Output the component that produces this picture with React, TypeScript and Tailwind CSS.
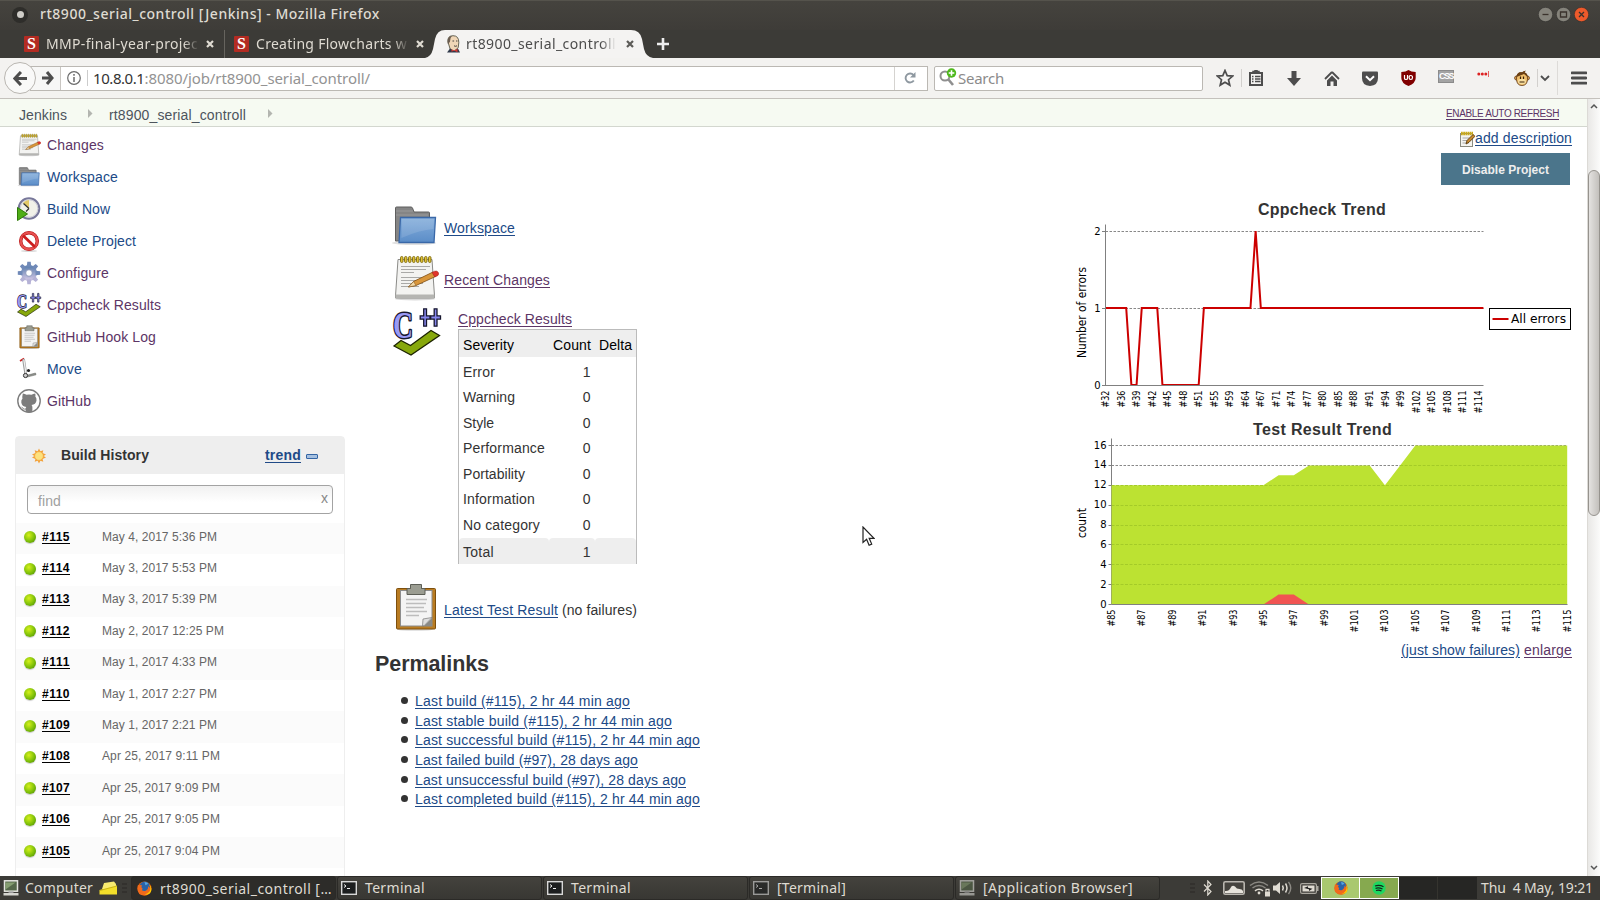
import { useLayoutEffect, useRef, useState, type ReactNode } from 'react';

const UI = "font-['Noto_Sans',sans-serif]";

/** Text that spreads its letters so that the run takes exactly `w` pixels. */
function Fit({ w, className = '', children }: { w: number; className?: string; children: string }) {
  const ref = useRef<HTMLSpanElement>(null);
  const [ls, setLs] = useState(0);
  useLayoutEffect(() => {
    if (ref.current) {
      const natural = ref.current.getBoundingClientRect().width - ls * children.length;
      setLs((w - natural) / children.length);
    }
    // eslint-disable-next-line
  }, [w, children]);
  return (
    <span ref={ref} className={`inline-block shrink-0 whitespace-pre ${className}`} style={{ letterSpacing: ls }}>
      {children}
    </span>
  );
}

/* ---------- icons ---------- */

type IconProps = { size: number };

function FolderIcon({ size }: IconProps) {
  return (
    <svg width={size} height={size} viewBox="0 0 48 48" className="shrink-0">
      <defs>
        <linearGradient id="fold" x1="0" y1="0" x2="0" y2="1">
          <stop offset="0" stopColor="#85aedb" />
          <stop offset="1" stopColor="#5b8dc8" />
        </linearGradient>
      </defs>
      <ellipse cx="23" cy="41" rx="22" ry="2" fill="#000" opacity=".12" />
      <path d="M4.500 39V6q0-1 1-1h14.500q1 0 1.500 1l1.500 4h14.500q1 0 1 1V38z" fill="#858585" stroke="#5f5f5f" />
      <path d="M5 9h17M5 13h32" stroke="#a5a5a5" strokeWidth=".7" />
      <path d="M9.500 15.500h35L43 40.500H8z" fill="url(#fold)" stroke="#3a68a8" strokeWidth="1.300" />
      <path d="M11 17h32l-.6 10q-14 1-32 9z" fill="#fff" opacity=".12" />
    </svg>
  );
}

function NotepadIcon({ size }: IconProps) {
  return (
    <svg width={size} height={size} viewBox="0 0 48 48" className="shrink-0">
      <ellipse cx="24" cy="45" rx="20" ry="1.500" fill="#000" opacity=".15" />
      <path d="M7 5.500h34L43.500 42v2h-39v-2z" fill="#f3f3f1" stroke="#8b8b88" />
      <path d="M4.500 40.500h39v3.500h-39z" fill="#b5b5b2" />
      {[0, 1, 2, 3, 4, 5, 6, 7].map((i) => (
        <rect key={i} x={9.500 + i * 4} y="2.500" width="2.500" height="6" rx="1.200" fill="#e0c234" stroke="#7d6a10" strokeWidth=".9" />
      ))}
      <path d="M10 12.500h29M10 15.500h25M10 18.500h13M10 23.500h25M10 26.500h18M10 29.500h22M10 32.500h18" stroke="#a9a9a7" />
      <path d="M17.500 33l5-5.500 19.500-9.500 2.500 4.500-19.500 9z" fill="#d9963a" stroke="#7d4c12" strokeWidth=".8" />
      <path d="M17.500 33l5-5.500 2.500 4z" fill="#f1d9a8" stroke="#7d4c12" strokeWidth=".5" />
      <path d="M41 18.500l2.500-1.300q2.500-.7 3.700 1.100t-.5 3.400l-2.900 1.300z" fill="#e0352b" stroke="#98231b" strokeWidth=".5" />
    </svg>
  );
}

function ClipboardIcon({ size }: IconProps) {
  return (
    <svg width={size} height={size} viewBox="0 0 48 48" className="shrink-0">
      <ellipse cx="24" cy="46.500" rx="18" ry="1.300" fill="#000" opacity=".15" />
      <rect x="5.500" y="5.500" width="39" height="40.500" rx="1" fill="#b97c22" stroke="#7d4f0d" />
      <rect x="9.500" y="7.500" width="31.500" height="35.500" fill="#f4f4f4" stroke="#8c8c8c" />
      <path d="M16 5.500h3.500V1.500h11v4H34V11.500H16z" fill="#9b9d92" stroke="#5d5f57" />
      <path d="M15 16.500h21M15 20.500h20M15 24.500h18M15 28.500h21M15 32.500h13" stroke="#bdbdbd" strokeWidth="1.600" />
      <path d="M41 34.500l-9 1.500-.5 6.800h1.500z" fill="#dedede" stroke="#777" strokeWidth=".7" />
      <path d="M41 35v8h-8z" fill="#8a8a86" />
    </svg>
  );
}

function CppIcon({ size }: IconProps) {
  return (
    <svg width={size} height={size} viewBox="0 0 48 48" className="shrink-0 overflow-visible">
      <text x="0" y="29.500" fontFamily="Liberation Serif, serif" fontWeight="bold" fontSize="37" fill="#9a9af5" stroke="#17172e" strokeWidth="3" strokeLinejoin="round" paintOrder="stroke" textLength="20" lengthAdjust="spacingAndGlyphs">C</text>
      {[26.500, 37].map((x) => (
        <path key={x} d={`M${x + 4.200} .8h2.800v7h3.500v3.400h-3.500v7h-2.800v-7h-3.500v-3.400h3.500z`} fill="#8787ee" stroke="#17172e" strokeWidth="1.300" />
      ))}
      <path d="M1 38l7-5.500 9.500 5L38 22.500l8.500 5L18 47z" fill="#87a80c" stroke="#1d2400" strokeWidth="1.300" />
    </svg>
  );
}

function ClockIcon({ size }: IconProps) {
  return (
    <svg width={size} height={size} viewBox="0 0 24 24" className="shrink-0">
      <circle cx="12" cy="11.500" r="10.300" fill="#f1f1e9" stroke="#77779a" strokeWidth="2" />
      <circle cx="12" cy="11.500" r="8.800" fill="none" stroke="#c9c9d6" />
      <path d="M12 11.500L6 6q3-3 6-3z" fill="#e3c967" />
      <path d="M12 11.500L6.500 6.500M12 11.500l-3 3" stroke="#333" strokeWidth="1.200" />
      <path d="M.5 10.500L10.500 17 .5 23.500z" fill="#4fae17" stroke="#2f7a08" />
    </svg>
  );
}

function StopIcon({ size }: IconProps) {
  return (
    <svg width={size} height={size} viewBox="0 0 24 24" className="shrink-0">
      <ellipse cx="12" cy="22" rx="8" ry="1" fill="#000" opacity=".15" />
      <circle cx="12" cy="12" r="8.300" fill="#fff" stroke="#b71010" strokeWidth="3.400" />
      <circle cx="12" cy="12" r="8.300" fill="none" stroke="#e65050" strokeWidth="2.200" />
      <path d="M6 6.500l12 11.500" stroke="#cb1d1d" strokeWidth="2.800" />
    </svg>
  );
}

function GearIcon({ size }: IconProps) {
  return (
    <svg width={size} height={size} viewBox="0 0 24 24" className="shrink-0">
      <defs>
        <linearGradient id="gear" x1="0" y1="0" x2="0" y2="1">
          <stop offset="0" stopColor="#6685b3" />
          <stop offset="1" stopColor="#c6bfdf" />
        </linearGradient>
      </defs>
      <g fill="url(#gear)">
        <circle cx="12" cy="12" r="5.500" fill="none" stroke="url(#gear)" strokeWidth="5" />
        {[0, 45, 90, 135, 180, 225, 270, 315].map((a) => (
          <path key={a} d="M9.800 5.500L10.300.8h3.400l.5 4.700z" fill={a > 90 && a < 270 ? '#b5b2d6' : '#7089b8'} transform={`rotate(${a} 12 12)`} />
        ))}
      </g>
      <circle cx="12" cy="12" r="3.300" fill="#fff" stroke="#7f8bb3" strokeWidth=".8" />
    </svg>
  );
}

function MoveIcon({ size }: IconProps) {
  return (
    <svg width={size} height={size} viewBox="0 0 24 24" className="shrink-0">
      <path d="M3 4l4-2.500" stroke="#c22" strokeWidth="1.600" />
      <path d="M6.500 2l2.300 15" stroke="#9a9a9a" strokeWidth="2.800" />
      <path d="M6.800 2.500l2.200 14" stroke="#efefef" strokeWidth="1.300" />
      <path d="M8 18.800l10.500-2.800.5 1.800-9 2.300z" fill="#8e918c" stroke="#60635e" strokeWidth=".5" />
      <circle cx="11.500" cy="13.500" r="1.600" fill="#222" />
      <circle cx="8.500" cy="18.500" r="2.100" fill="#ccc" stroke="#333" strokeWidth="1" />
    </svg>
  );
}

function GithubIcon({ size }: IconProps) {
  return (
    <svg width={size} height={size} viewBox="0 0 24 24" className="shrink-0">
      <circle cx="12" cy="12" r="11.200" fill="#fff" stroke="#7d7d7d" strokeWidth="1.400" />
      <path d="M5.800 4.500q2.300.2 3.700 1.300 2.500-.5 5 0 1.400-1.100 3.700-1.300.6 1.600.1 3 1.500 1.700 1.200 4-.6 4-5 4.500.9.900.9 2.500v4.300l-3.400.7-3.400-.7v-2.300q-2.300.4-3.200-1.200-.5-1-1.400-1.500.9-.3 1.900 1 1 1.300 2.700.8.100-1 .7-1.600-4.400-.5-5-4.500-.3-2.300 1.200-4-.5-1.400.3-5z" fill="#7d7d7d" />
    </svg>
  );
}

function SunIcon() {
  return (
    <svg width="16" height="16" viewBox="0 0 16 16" className="shrink-0">
      <path d="M8 .5l1.400 2.700 2.900-1-.7 2.900 3.400 1.500L12.600 8l2.400 1.600-3.400 1.300.7 2.900-2.900-1L8 15.500l-1.400-2.700-2.900 1 .7-2.900L1 9.600 3.400 8 1 6.400l3.400-1.300-.7-2.900 2.900 1z" fill="#f3a23b" />
      <circle cx="8" cy="8" r="4.300" fill="#fde17d" stroke="#f0a63f" strokeWidth=".6" />
    </svg>
  );
}

function JenkinsHead() {
  return (
    <svg width="16" height="18" viewBox="0 0 16 18" className="shrink-0">
      <path d="M3 7Q2 1 8 .7q6 0 5.800 7l-.6 5-4 3.500-4-2z" fill="#f0d6b7" stroke="#443" strokeWidth=".8" />
      <path d="M2.800 9Q1.600 1.500 7 .8 4.800 3 4.900 7z" fill="#6b5d50" />
      <path d="M2 17.500l3-4 4 2.500 4-2.500 2 4z" fill="#30394a" />
      <path d="M6.500 14.200l6 3v-3.400l-6 3z" fill="#d33833" />
      <path d="M7.500 6h1.600M11 6h1.400M9 10.800q1.500 1 3 0" stroke="#333" strokeWidth=".9" fill="none" />
    </svg>
  );
}

function FirefoxIcon({ size }: IconProps) {
  return (
    <svg width={size} height={size} viewBox="0 0 16 16" className="shrink-0">
      <circle cx="8" cy="8" r="7.500" fill="#e66000" />
      <circle cx="8.300" cy="6" r="5.600" fill="#2a63a8" />
      <path d="M8 1q3 0 4 2l-3 1.500z" fill="#56a5e0" />
      <path d="M1 4q1 .7 2 .5 1.500-.4 2.500.5L4.500 6.500l1.500 1.700-.8 1.600q2.300 1.600 4.500.2 2.500-1 2.300-4.500 2.300 1 2.500 4Q13 15.500 8 15.500 .2 15 .5 8z" fill="#f06a1c" />
      <path d="M12.500 4q3 3 1 7-2 3-5 3.500 7 .5 6.900-6Q15 5 12.500 4z" fill="#ffcb00" />
    </svg>
  );
}

function TerminalIcon({ dim = false }: { dim?: boolean }) {
  return (
    <svg width="16" height="14" viewBox="0 0 16 14" className={dim ? 'shrink-0 opacity-60' : 'shrink-0'}>
      <rect x=".7" y=".7" width="14.600" height="12.600" fill="#1c1e1f" stroke="#d8d8d8" strokeWidth="1.400" />
      <path d="M3 3.500l2 1.500-2 1.500M6 7.500h3" stroke="#eee" fill="none" />
    </svg>
  );
}

function ComputerIcon({ dim = false }: { dim?: boolean }) {
  return (
    <svg width="16" height="16" viewBox="0 0 16 16" className={dim ? 'shrink-0 opacity-60' : 'shrink-0'}>
      <rect x="1.500" y=".8" width="13" height="10.400" fill="#55684a" stroke="#e4e4e0" strokeWidth="1.500" />
      <path d="M2.500 9.500V2.500h10z" fill="#9ab582" opacity=".7" />
      <path d="M5.500 11.500h5V13h-5z" fill="#999" />
      <rect x=".5" y="13" width="15" height="2.500" fill="#d5d5d0" />
    </svg>
  );
}

/* ---------- browser chrome ---------- */

function WindowTitle() {
  return (
    <div className={`flex h-[30px] items-center border-t border-[#55534c] bg-linear-to-b from-[#45433e] to-[#3e3c38] pb-[2px] pl-[12px] pr-[11px] text-[#dfdbd2] ${UI}`}>
      <div className="flex size-4 items-center justify-center rounded-full bg-[#2e2d2a]">
        <span className="size-[7px] rounded-full bg-[#cfcdc8]" />
      </div>
      <Fit w={340} className="-mt-[2px] ml-[12px] text-[14px] font-medium">rt8900_serial_controll [Jenkins] - Mozilla Firefox</Fit>
      <div className="ml-auto flex gap-[3px]">
        {['M4.500 7.500h6', 'M4.500 5h6v5h-6z', 'M5 5l5 5M10 5l-5 5'].map((d, i) => (
          <svg key={d} width="15" height="15" viewBox="0 0 15 15">
            <circle cx="7.500" cy="7.500" r="7.200" fill={i === 2 ? '#ee5a2b' : '#85837b'} stroke="#2f2e2b" strokeWidth=".6" />
            <path d={d} stroke="#3a322c" strokeWidth="1.300" fill="none" />
          </svg>
        ))}
      </div>
    </div>
  );
}

const tabClose = (color: string) => (
  <svg width="8" height="8" viewBox="0 0 8 8" className="shrink-0">
    <path d="M1 1l6 6M7 1L1 7" stroke={color} strokeWidth="2.200" />
  </svg>
);

function TabStrip() {
  return (
    <div className={`flex h-[28px] bg-[#3c3b37] text-[14px] leading-[25px] text-[#dfdbd2] ${UI}`}>
      {[['MMP-final-year-projec', 'w-[225px] pl-[24px] border-r border-[#66645e]', 152], ['Creating Flowcharts w', 'w-[204px] pl-[9px]', 151]].map(([t, c, w]) => (
        <div key={t as string} className={`flex items-center ${c}`}>
          <span className="flex h-4 w-[15px] shrink-0 items-center justify-center rounded-[1px] bg-[#b32b22] font-['Liberation_Serif',serif] text-[16px] font-bold leading-4 text-white">S</span>
          <span className="-mt-[2px] ml-[7px] mr-[7px] w-[153px] shrink-0 overflow-hidden mask-r-from-90%">
            <Fit w={w as number}>{t as string}</Fit>
          </span>
          {tabClose('#dfdbd2')}
        </div>
      ))}
      <div className="relative flex w-[223px] items-center pl-[16px] text-[#4c4c4c]">
        <svg width="228" height="28" viewBox="0 0 228 28" className="absolute -left-[4px] top-0">
          <path d="M0 28q6-1 8-9l2-10q2-9 10-9h186q9 0 11 9l2 10q2 8 9 9z" fill="#f4f3f2" />
        </svg>
        <div className="relative flex items-center">
          <JenkinsHead />
          <span className="-mt-[2px] ml-[5px] mr-[10px] w-[150px] overflow-hidden mask-r-from-90%">
            <Fit w={150}>rt8900_serial_controll</Fit>
          </span>
          {tabClose('#5c5b58')}
        </div>
      </div>
      <svg width="14" height="14" viewBox="0 0 14 14" className="ml-[4px] mt-[7px]">
        <path d="M7 1v12M1 7h12" stroke="#eee" strokeWidth="2.600" />
      </svg>
    </div>
  );
}

const G = '#4d4d4d';

function Slot({ w, children, className = '' }: { w: string; children: ReactNode; className?: string }) {
  return <div className={`flex shrink-0 items-center justify-center ${w} ${className}`}>{children}</div>;
}

function Toolbar() {
  return (
    <div className={`flex h-[41px] items-center border-b border-[#c4c1bc] bg-[#f3f2f0] pl-[4px] text-[15px] ${UI}`}>
      <div className="z-10 flex size-[32px] shrink-0 items-center justify-center rounded-full border border-[#b9b6b1] bg-[#f9f9f8]">
        <svg width="14" height="15" viewBox="0 0 15 16"><path d="M8.500 1L2 8l6.500 7M2 8h13" stroke={G} strokeWidth="3.200" fill="none" /></svg>
      </div>
      <div className="-ml-[6px] flex h-[25px] w-[898px] shrink-0 items-center border border-[#bbb8b3] bg-white">
        <div className="flex h-full w-[30px] items-center justify-center border-r border-[#c9c6c2] bg-[#f7f7f6] pl-1">
          <svg width="12" height="14" viewBox="0 0 12 14"><path d="M5 1l5 6-5 6M0 7h10" stroke={G} strokeWidth="3" fill="none" /></svg>
        </div>
        <svg width="14" height="14" viewBox="0 0 14 14" className="ml-[6px]">
          <circle cx="7" cy="7" r="6.300" fill="none" stroke="#6b6b6b" strokeWidth="1.200" />
          <path d="M7 6v5M7 3v1.800" stroke="#6b6b6b" strokeWidth="1.500" />
        </svg>
        <span className="ml-[6px] h-4 w-px bg-[#ccc]" />
        <Fit w={51.500} className="ml-[5px] text-[#333]">10.8.0.1</Fit>
        <Fit w={225.500} className="text-[#939393]">:8080/job/rt8900_serial_controll/</Fit>
        <div className="ml-auto flex h-full w-[33px] items-center justify-center border-l border-[#d5d3d0] pr-[2px]">
          <svg width="12" height="12" viewBox="0 0 12 12"><path d="M9.800 8.500A4.500 4.500 0 1 1 9.500 3" stroke="#8e98a0" strokeWidth="1.900" fill="none" /><path d="M11.500 0v5.500H6z" fill="#8e98a0" /></svg>
        </div>
      </div>
      <div className="ml-[6px] flex h-[25px] w-[269px] shrink-0 items-center rounded-[2px] border border-[#bbb8b3] bg-white pl-[4px]">
        <svg width="18" height="18" viewBox="0 0 18 18" className="-mt-[3px]">
          <circle cx="6" cy="8" r="4.500" fill="none" stroke="#8f8f8f" strokeWidth="2" />
          <path d="M9 11l5 6" stroke="#8f8f8f" strokeWidth="2.600" />
          <circle cx="12.500" cy="5" r="4.700" fill="#4fb81c" />
          <path d="M12.500 2.200v5.600M9.700 5h5.600" stroke="#fff" strokeWidth="1.600" />
        </svg>
        <Fit w={46} className="ml-[1px] text-[#8b8b8b]">Search</Fit>
      </div>
      <Slot w="w-[38px]" className="pl-[6px]">
        <svg width="18" height="18" viewBox="0 0 18 18"><path d="M9 1.500l2.200 5.100 5.500.5-4.200 3.600 1.300 5.400L9 13.200l-4.800 2.900 1.300-5.400L1.300 7.100l5.500-.5z" fill="none" stroke={G} strokeWidth="1.700" /></svg>
      </Slot>
      <Slot w="w-[34px]" className="h-[18px] border-l border-[#d2d0cd] pr-[5px]">
        <svg width="14" height="16" viewBox="0 0 14 16"><path d="M1 3h12v12H1z" fill="none" stroke={G} strokeWidth="2" /><path d="M4 3V1.500h2V0h2v1.500h2V3zM3 6.500h1.500M6 6.500h5.500M3 9h1.500M6 9h5.500M3 11.500h1.500M6 11.500h5.500" stroke={G} fill={G} strokeWidth="1.500" /></svg>
      </Slot>
      <Slot w="w-[38px]">
        <svg width="14" height="15" viewBox="0 0 14 15"><path d="M4.500 0h5v7H14l-7 8-7-8h4.500z" fill={G} /></svg>
      </Slot>
      <Slot w="w-[38px]">
        <svg width="16" height="15" viewBox="0 0 16 15"><path d="M8 1L1 8M8 1l7 7" stroke={G} strokeWidth="1.800" /><path d="M8 4.500L3 9.500V15h3.500v-4.500h3V15H13V9.500z" fill={G} /></svg>
      </Slot>
      <Slot w="w-[38px]">
        <svg width="16" height="15" viewBox="0 0 16 15"><path d="M0 1.500Q0 .5 1 .5h14q1 0 1 1V7q0 7.500-8 8Q0 14.500 0 7z" fill={G} /><path d="M4 5.200l4 4 4-4" stroke="#fff" strokeWidth="2" fill="none" /></svg>
      </Slot>
      <Slot w="w-[38px]">
        <svg width="15" height="16" viewBox="0 0 15 16"><path d="M7.500 0Q10 2 14.700 2v6q0 5-7.200 8Q.3 13 .3 8V2Q5 2 7.500 0z" fill="#800000" /><path d="M3.500 5v3.500q0 1 1.500 1t1.500-1V5M9.800 5.500q1.700 0 1.700 2t-1.700 2-1.700-2 1.700-2z" stroke="#fff" strokeWidth="1.200" fill="none" /></svg>
      </Slot>
      <Slot w="w-[38px]">
        <span className="-mt-[4px] flex h-[13px] w-4 shrink-0 items-center justify-center border border-[#8b8b8b] bg-[#a3a3a3] font-['Liberation_Sans',sans-serif] text-[9px] font-bold leading-[9px] text-white"><Fit w={14}>CSS</Fit></span>
      </Slot>
      <Slot w="w-[36px]">
        <svg width="12" height="6" viewBox="0 0 12 6" className="-mt-[8px]"><circle cx="1.800" cy="3" r="1.500" fill="#d22" /><circle cx="5.300" cy="3" r="1.500" fill="#d22" /><circle cx="8.800" cy="3" r="1.500" fill="#d22" /><path d="M11.500 0v6" stroke="#d22" strokeWidth=".7" /></svg>
      </Slot>
      <Slot w="w-[36px]" className="pl-[5px]">
        <svg width="16" height="16" viewBox="0 0 16 16"><circle cx="2.500" cy="8" r="2" fill="#d99a4e" stroke="#5c3510" strokeWidth=".7" /><circle cx="13.500" cy="8" r="2" fill="#d99a4e" stroke="#5c3510" strokeWidth=".7" /><path d="M8 2.500q6 0 5.500 7Q13 15.500 8 15.500T2.500 9.500q-.5-7 5.500-7z" fill="#f0bf6c" stroke="#5c3510" strokeWidth=".8" /><path d="M2.500 7Q3 1.500 8 2.500q1-2 4-1.800l-1.500 1.500Q14 3.500 13.500 7L10 4z" fill="#6b4014" /><ellipse cx="8" cy="11.500" rx="4" ry="2.800" fill="#f8dfa0" /><path d="M6.500 6.500v2.500M9.500 6.500v2.500M5.500 12h5" stroke="#3a2208" strokeWidth="1.200" /></svg>
      </Slot>
      <Slot w="w-[20px]" className="h-[18px] border-l border-[#d2d0cd] pr-[6px]">
        <svg width="10" height="7" viewBox="0 0 10 7"><path d="M1 1l4 4 4-4" stroke={G} strokeWidth="1.800" fill="none" /></svg>
      </Slot>
      <Slot w="w-[43px]" className="h-[34px] border-l border-[#dddbd8]">
        <svg width="16" height="14" viewBox="0 0 16 14"><path d="M1 1.800h14M1 7h14M1 12.200h14" stroke={G} strokeWidth="2.800" strokeLinecap="round" /></svg>
      </Slot>
    </div>
  );
}

/* ---------- page ---------- */

function Crumb() {
  return <svg width="5" height="9" viewBox="0 0 5 9" className="mb-[3px]"><path d="M0 0l4.500 4.500L0 9z" fill="#b3b5b0" /></svg>;
}

function Breadcrumbs() {
  return (
    <div className="flex h-[28px] items-center border-b border-[#d3d7cf] bg-[#f6faf2] pl-[19px] pr-[28px] pt-[5px] text-[14px] text-[#4d545d]">
      <Fit w={48}>Jenkins</Fit>
      <span className="w-[21px]" /><Crumb /><span className="w-[16px]" />
      <Fit w={137}>rt8900_serial_controll</Fit>
      <span className="w-[22px]" /><Crumb />
      <Fit w={113} className="ml-auto mb-[3px] text-[10px] leading-[12px] text-[#5c3566] underline underline-offset-2">ENABLE AUTO REFRESH</Fit>
    </div>
  );
}

const BLUE = 'text-[#204a87]';
const PURPLE = 'text-[#5c3566]';

const tasks: { label: string; w: number; color: string; icon: ReactNode }[] = [
  { label: 'Changes', w: 57, color: PURPLE, icon: <NotepadIcon size={24} /> },
  { label: 'Workspace', w: 71, color: BLUE, icon: <FolderIcon size={24} /> },
  { label: 'Build Now', w: 63, color: BLUE, icon: <ClockIcon size={24} /> },
  { label: 'Delete Project', w: 89, color: BLUE, icon: <StopIcon size={24} /> },
  { label: 'Configure', w: 62, color: PURPLE, icon: <GearIcon size={24} /> },
  { label: 'Cppcheck Results', w: 114, color: PURPLE, icon: <CppIcon size={24} /> },
  { label: 'GitHub Hook Log', w: 109, color: PURPLE, icon: <ClipboardIcon size={24} /> },
  { label: 'Move', w: 35, color: BLUE, icon: <MoveIcon size={24} /> },
  { label: 'GitHub', w: 44, color: PURPLE, icon: <GithubIcon size={24} /> },
];

const builds: [string, string, number][] = [
  ['#115', 'May 4, 2017 5:36 PM', 115],
  ['#114', 'May 3, 2017 5:53 PM', 115],
  ['#113', 'May 3, 2017 5:39 PM', 115],
  ['#112', 'May 2, 2017 12:25 PM', 122],
  ['#111', 'May 1, 2017 4:33 PM', 115],
  ['#110', 'May 1, 2017 2:27 PM', 115],
  ['#109', 'May 1, 2017 2:21 PM', 115],
  ['#108', 'Apr 25, 2017 9:11 PM', 118],
  ['#107', 'Apr 25, 2017 9:09 PM', 118],
  ['#106', 'Apr 25, 2017 9:05 PM', 118],
  ['#105', 'Apr 25, 2017 9:04 PM', 118],
];

function Sidebar() {
  return (
    <div className="w-[375px] shrink-0 pl-[15px] pt-[2px]">
      {tasks.map((t) => (
        <div key={t.label} className="flex h-[32px] items-center pl-[2px]">
          {t.icon}
          <Fit w={t.w} className={`ml-[6px] text-[14px] leading-5 ${t.color}`}>{t.label}</Fit>
        </div>
      ))}
      <div className="mt-[19px] h-[460px] w-[330px] rounded-t-[4px] border border-[#eeeeee]">
        <div className="flex h-[37px] items-center bg-[#eeeeee] pl-[15px] text-[14px] font-bold text-[#333]">
          <SunIcon />
          <Fit w={88} className="ml-[14px]">Build History</Fit>
          <Fit w={36} className={`ml-[116px] underline underline-offset-2 ${BLUE}`}>trend</Fit>
          <span className="ml-[5px] mt-[2px] h-[5px] w-[12px] rounded-[1px] border border-[#3465a4] bg-[#a5c0e0]" />
        </div>
        <div className="mx-[11px] mb-[9px] mt-[11px] flex h-[29px] w-[306px] items-center rounded-[4px] border border-[#a3a3a3] bg-linear-to-b from-[#f1f1f1] to-white to-60% pl-[10px] pr-[4px] text-[14px] text-[#a0a0a0]">
          <Fit w={23} className="mt-[3px]">find</Fit>
          <span className="-mt-[3px] ml-auto text-[14px] text-[#888]">x</span>
        </div>
        {builds.map(([n, d, w], i) => (
          <div key={n} className={`flex h-[31.400px] items-center pl-[8px] ${i % 2 === 0 ? 'bg-[#fbfbfb]' : ''}`}>
            <span className="-mt-[3px] size-[12px] rounded-full bg-radial-[at_40%_35%] from-[#d6f01c] via-[#85c40a] to-[#3f8400] shadow-[0_1px_1px_#0003]" />
            <Fit w={28} className="-mt-[4px] ml-[6px] text-[12px] font-bold leading-4 text-black underline underline-offset-2">{n}</Fit>
            <Fit w={w} className="-mt-[4px] ml-[32px] text-[12px] leading-4 text-[#666]">{d}</Fit>
          </div>
        ))}
      </div>
    </div>
  );
}

const severities = ['Error', 'Warning', 'Style', 'Performance', 'Portability', 'Information', 'No category'];
const sevWidths = [32, 52, 31, 82, 62, 72, 77];

function SeverityTable() {
  return (
    <div className="w-[179px] border border-b-0 border-[#bbb] text-[14px] text-[#333]">
      <div className="flex h-[27px] items-center bg-[#eee] pl-[4px] pt-[2px] text-black">
        <Fit w={51}>Severity</Fit>
        <Fit w={38} className="ml-[39px]">Count</Fit>
        <Fit w={33} className="ml-[8px]">Delta</Fit>
      </div>
      <div className="pt-[2px]">
        {severities.map((s, i) => (
          <div key={s} className="flex h-[25.500px] items-center justify-between pl-[4px] pr-[45.500px]">
            <Fit w={sevWidths[i]}>{s}</Fit>
            <span>{s === 'Error' ? 1 : 0}</span>
          </div>
        ))}
      </div>
      <div className="flex h-[26px]">
        <div className="flex w-[90px] items-center rounded-t-[4px] bg-[#eee] pl-[4px] pt-[2px]"><Fit w={31}>Total</Fit></div>
        <div className="flex w-[46px] items-center justify-end rounded-t-[4px] bg-[#eee] pr-[4.500px] pt-[2px]">1</div>
        <div className="flex-1 rounded-t-[4px] bg-[#eee]" />
      </div>
    </div>
  );
}

const permalinks: [string, number][] = [
  ['Last build (#115), 2 hr 44 min ago', 215],
  ['Last stable build (#115), 2 hr 44 min ago', 257],
  ['Last successful build (#115), 2 hr 44 min ago', 285],
  ['Last failed build (#97), 28 days ago', 223],
  ['Last unsuccessful build (#97), 28 days ago', 271],
  ['Last completed build (#115), 2 hr 44 min ago', 285],
];

const LINK = 'underline underline-offset-2';

function Overview() {
  return (
    <div className="flex-1 pt-[75px] text-[14px] leading-5 text-[#333]">
      <div className="ml-[16px]">
        <div className="flex h-[48px] items-center">
          <FolderIcon size={48} />
          <Fit w={71} className={`ml-[5px] mt-[3px] ${LINK} ${BLUE}`}>Workspace</Fit>
        </div>
        <div className="mt-[4px] flex h-[48px] items-center">
          <NotepadIcon size={48} />
          <Fit w={106} className={`ml-[5px] mt-[3px] ${LINK} ${PURPLE}`}>Recent Changes</Fit>
        </div>
        <div className="mt-[5px] flex">
          <div className="w-[67px] pl-[2px] pt-px"><CppIcon size={48} /></div>
          <div>
            <Fit w={114} className={`mt-[2px] block h-[17px] ${LINK} ${PURPLE}`}>Cppcheck Results</Fit>
            <SeverityTable />
          </div>
        </div>
        <div className="mt-[19px] flex h-[48px] items-center">
          <ClipboardIcon size={48} />
          <Fit w={114} className={`ml-[5px] mt-[6px] ${LINK} ${BLUE}`}>Latest Test Result</Fit>
          <Fit w={75} className="ml-[4px] mt-[6px]">(no failures)</Fit>
        </div>
      </div>
      <h2 className="mt-[20px] h-[26px] text-[21.500px] font-bold leading-[26px]"><Fit w={114}>Permalinks</Fit></h2>
      <ul className="mt-[15px] pl-[26px]">
        {permalinks.map(([t, w]) => (
          <li key={t} className="flex h-[19.600px] items-center">
            <span className="-mt-px size-[7px] rounded-full bg-[#333]" />
            <Fit w={w} className={`ml-[7px] ${LINK} ${BLUE}`}>{t}</Fit>
          </li>
        ))}
      </ul>
    </div>
  );
}

const cppLabels = [32, 36, 39, 42, 45, 48, 51, 55, 59, 64, 67, 71, 74, 77, 80, 85, 88, 91, 94, 99, 102, 105, 108, 111, 114];
const cppPoints: [number, number][] = [[0, 1], [4, 1], [5, 0], [6, 0], [7, 1], [10, 1], [11, 0], [18, 0], [19, 1], [28, 1], [29, 2], [30, 1], [73, 1]];

function TickLabel({ x, y, n }: { x: number; y: number; n: number }) {
  const len = n > 99 ? 23 : 17;
  return (
    <text transform={`translate(${x + 3.500} ${y + len}) rotate(-90)`} fontSize="10" textLength={len} lengthAdjust="spacingAndGlyphs">{`#${n}`}</text>
  );
}

/** Origin of both charts is the column's left edge. */
function CppcheckChart() {
  const x0 = 30.500, y0 = 162.500;
  const pts = cppPoints.map(([i, v]) => `${x0 + i * 5.177},${y0 - 0.500 - v * 77}`).join(' ');
  return (
    <svg width="500" height="192" viewBox="0 0 500 192" className="block" fontFamily="DejaVu Sans, sans-serif">
      {[1, 2].map((v) => (
        <path key={v} d={`M${x0} ${y0 - v * 77}H408.500`} stroke="#888" strokeDasharray="2.500 1.500" />
      ))}
      <polyline points={pts} fill="none" stroke="#c00" strokeWidth="2" />
      <path d={`M${x0} 1.500V${y0}H408.500M27 ${y0}h4M27 ${y0 - 77}h4M27 ${y0 - 154}h4`} stroke="#808080" fill="none" />
      {[0, 1, 2].map((v) => (
        <text key={v} x="25.500" y={y0 + 3.500 - v * 77} textAnchor="end" fontSize="10">{v}</text>
      ))}
      {cppLabels.map((n, i) => <TickLabel key={n} x={x0 + i * 15.530} y={167.500} n={n} />)}
      <text transform="translate(11 135) rotate(-90)" fontSize="12" textLength="91" lengthAdjust="spacingAndGlyphs">Number of errors</text>
      <rect x="414.500" y="85.500" width="81" height="21" fill="#fff" stroke="#000" />
      <path d="M417.500 96h16" stroke="#c00" strokeWidth="2" />
      <text x="436" y="100" fontSize="12" textLength="55" lengthAdjust="spacingAndGlyphs">All errors</text>
    </svg>
  );
}

function TestResultChart() {
  const x0 = 36.500, y0 = 167.500, u = 9.9375, s = 15.190;
  const p = (i: number, v: number) => `${x0 + i * s},${y0 - v * u}`;
  const green = [[0, 12], [10, 12], [11, 13], [12, 13], [13, 14], [17, 14], [18, 12], [19, 14], [20, 16], [30, 16], [30, 0], [0, 0]].map(([i, v]) => p(i, v)).join(' ');
  const red = [[10, 0], [11, 1], [12, 1], [13, 0]].map(([i, v]) => p(i, v)).join(' ');
  const ticks = [2, 4, 6, 8, 10, 12, 14, 16];
  const lineY = (v: number) => Math.floor(y0 - v * u) + 0.500;
  return (
    <svg width="500" height="200" viewBox="0 0 500 200" className="block" fontFamily="DejaVu Sans, sans-serif">
      {[14, 16].map((v) => (
        <path key={v} d={`M${x0} ${lineY(v)}H492`} stroke="#888" strokeDasharray="2.500 1.500" />
      ))}
      <path d={`M${x0} 1.500V${y0}`} stroke="#808080" />
      <polygon points={green} fill="#bce232" />
      {ticks.filter((v) => v < 14).map((v) => (
        <path key={v} d={`M${x0} ${lineY(v)}H492`} stroke="#a4cb28" strokeDasharray="3 1.500" />
      ))}
      <path d={`M${x0 + 19 * s} ${lineY(14)}H492`} stroke="#a4cb28" strokeDasharray="3 1.500" />
      <polygon points={red} fill="#f15452" />
      <path d={`M${x0} ${y0}H492.500`} stroke="#808080" />
      {[0, ...ticks].map((v) => (
        <g key={v}>
          <path d={`M33.500 ${v ? lineY(v) : y0}h3`} stroke="#808080" />
          <text x="31.500" y={y0 - v * u + 3} textAnchor="end" fontSize="10">{v}</text>
        </g>
      ))}
      {Array.from({ length: 16 }, (_, i) => <TickLabel key={i} x={x0 + i * 30.380} y={172.500} n={85 + i * 2} />)}
      <text transform="translate(11 101) rotate(-90)" fontSize="12" textLength="30" lengthAdjust="spacingAndGlyphs">count</text>
    </svg>
  );
}

function Trends() {
  return (
    <div className="w-[512px] shrink-0 pt-[1px] text-[14px] leading-5">
      <div className="flex h-[20px] items-center justify-end pr-[15px]">
        <svg width="15" height="16" viewBox="0 0 15 16" className="mt-[2px]">
          <rect x=".5" y="2.500" width="12" height="13" fill="#f4f4f0" stroke="#8b8b80" />
          <path d="M1 2.500h12" stroke="#c9a91a" strokeWidth="3.500" strokeDasharray="1.800 .4" />
          <path d="M2.500 7h7M2.500 9.500h5M2.500 12h6" stroke="#aaa" />
          <path d="M6 13l1-3.500L13 3.500l2 1.800-6 6z" fill="#c98a2e" stroke="#5a3a0c" strokeWidth=".9" />
        </svg>
        <Fit w={97} className={`${LINK} ${BLUE}`}>add description</Fit>
      </div>
      <div className="flex justify-end pr-[17px] pt-[5px]">
        <button className="flex h-[32px] w-[129px] items-center justify-center bg-[#4b758b] pt-[2px] text-[12px] font-bold text-[#eeeeee]">
          <Fit w={87}>Disable Project</Fit>
        </button>
      </div>
      <h3 className="mt-[14px] flex h-[24px] items-start pl-[183px] text-[16px] font-bold leading-[22px] text-[#333]">
        <Fit w={128}>Cppcheck Trend</Fit>
      </h3>
      <CppcheckChart />
      <h3 className="mt-[5px] flex h-[17px] items-start pl-[178px] text-[16px] font-bold leading-[20px] text-[#333]">
        <Fit w={139}>Test Result Trend</Fit>
      </h3>
      <TestResultChart />
      <div className="mt-[3px] flex justify-end gap-[4px] pr-[15px]">
        <Fit w={119} className={`${LINK} ${BLUE}`}>(just show failures)</Fit>
        <Fit w={48} className={`${LINK} ${PURPLE}`}>enlarge</Fit>
      </div>
    </div>
  );
}

function Scrollbar() {
  return (
    <div className="flex w-[13px] shrink-0 flex-col items-center justify-between border-l border-[#dcdad6] bg-linear-to-r from-[#e9e8e6] to-[#fbfbfa]">
      <svg width="8" height="6" viewBox="0 0 8 6" className="mt-[4px]"><path d="M1 5l3-3 3 3" stroke="#555" strokeWidth="1.500" fill="none" /></svg>
      <div className="mb-[349px] mt-[61px] w-full flex-1 rounded-full border border-[#96938e] bg-linear-to-r from-[#e4e2e0] to-[#c3c0bc]" />
      <svg width="8" height="6" viewBox="0 0 8 6" className="mb-[5px]"><path d="M1 1l3 3 3-3" stroke="#555" strokeWidth="1.500" fill="none" /></svg>
    </div>
  );
}

/* ---------- taskbar ---------- */

function Task({ icon, label, w, active = false }: { icon: ReactNode; label: string; w: number; active?: boolean }) {
  return (
    <div className={`mr-px flex h-[24px] w-[205px] shrink-0 items-center rounded-[3px] border border-[#2b2a27] ${active ? 'bg-[#2d2c29] pl-[5px]' : 'bg-linear-to-b from-[#44423d] to-[#383733] pl-[3px]'}`}>
      {icon}
      <Fit w={w} className={active ? 'ml-[8px] mt-[1px]' : 'ml-[8px]'}>{label}</Fit>
    </div>
  );
}

function Taskbar() {
  return (
    <div className={`flex h-[24px] items-center bg-[#3c3b37] text-[14px] leading-[22px] text-[#dfdbd2] ${UI}`}>
      <div className="flex w-[131px] shrink-0 items-center pl-[3px]">
        <ComputerIcon />
        <Fit w={68} className="ml-[6px]">Computer</Fit>
        <svg width="19" height="14" viewBox="0 0 19 14" className="ml-[6px]"><path d="M3 8L5 2l10-1.500 2 2.500v6z" fill="#f7ea70" /><path d="M.5 13.500V9L18 4.500v9z" fill="#f3df2a" /><path d="M1 9.500l17-4.500" stroke="#b9a20c" strokeWidth=".7" /></svg>
        <svg width="5" height="12" viewBox="0 0 5 12" className="ml-[4px]"><path d="M0 2h5M0 6h5M0 10h5" stroke="#2a2926" strokeWidth="1.200" /></svg>
      </div>
      <Task active icon={<FirefoxIcon size={15} />} label="rt8900_serial_controll […" w={172} />
      <Task icon={<TerminalIcon />} label="Terminal" w={60} />
      <Task icon={<TerminalIcon />} label="Terminal" w={60} />
      <Task icon={<TerminalIcon dim />} label="[Terminal]" w={69} />
      <Task icon={<ComputerIcon dim />} label="[Application Browser]" w={150} />
      <svg width="5" height="12" viewBox="0 0 5 12" className="ml-[29px] shrink-0"><path d="M0 2h5M0 6h5M0 10h5" stroke="#2a2926" strokeWidth="1.200" /></svg>
      <svg width="10" height="16" viewBox="0 0 10 16" className="ml-[8px] shrink-0"><path d="M1 4.500l7 7L4.800 15V1L8 4.500l-7 7" stroke="#dfdbd2" strokeWidth="1.200" fill="none" /></svg>
      <svg width="22" height="14" viewBox="0 0 22 14" className="ml-[10px] shrink-0"><rect x=".8" y=".8" width="20.400" height="12.400" rx="1.500" fill="#45433e" stroke="#b9b6af" strokeWidth="1.600" /><path d="M2 12v-2q4 .5 5.500-3 1.500-3.500 4.500-1.500 1.500 2.500 4.500 2.500 2.500 0 3.500 2v2z" fill="#e6e3db" /></svg>
      <svg width="22" height="18" viewBox="0 0 22 18" className="ml-[4px] shrink-0"><path d="M1 6.500q9-7 18 0M3.500 9q6.500-5 13 0" stroke="#8b8983" strokeWidth="1.500" fill="none" /><path d="M6 11.800q4-3 8 0" stroke="#dfdbd2" strokeWidth="1.600" fill="none" /><circle cx="10" cy="14" r="1.400" fill="#dfdbd2" /><path d="M16 12.500h5v5h-5z" fill="#dfdbd2" /><path d="M17 12.500v-2.200h3v2.200" stroke="#dfdbd2" fill="none" strokeWidth="1.200" /></svg>
      <svg width="20" height="14" viewBox="0 0 20 14" className="ml-[2px] shrink-0"><path d="M0 4.500h3L7 1v12L3 9.500H0z" fill="#dfdbd2" /><path d="M9.500 4.500q1.500 2.500 0 5M12.500 2.500q3 4.500 0 9" stroke="#dfdbd2" strokeWidth="1.500" fill="none" /><path d="M15.500 .8q4.500 6.200 0 12.400" stroke="#8b8983" strokeWidth="1.400" fill="none" /></svg>
      <svg width="19" height="11" viewBox="0 0 19 11" className="ml-[7px] shrink-0"><rect x=".6" y=".6" width="15.800" height="9.800" rx="1.500" fill="#3c3b37" stroke="#aaa79f" strokeWidth="1.200" /><rect x="2.500" y="2.500" width="12" height="6" fill="#dfdbd2" /><rect x="17" y="3" width="1.500" height="5" fill="#aaa79f" /><path d="M4 5L8 3.200v1.600l4.500 1L9 8V6.300z" fill="#222" /></svg>
      <div className="ml-[2px] flex h-[22px] w-[156px] shrink-0">
        <div className="flex w-[39px] items-center justify-center border border-white bg-[#a9c86f]"><FirefoxIcon size={14} /></div>
        <div className="flex w-[39px] items-center justify-center border border-l-0 border-white bg-[#86a94f]">
          <svg width="14" height="14" viewBox="0 0 14 14"><circle cx="7" cy="7" r="6.700" fill="#1ed760" /><path d="M3 5q4.500-1.500 8.500.8M3.500 7.300q3.500-1 7 .7M4 9.500q3-.8 5.500.5" stroke="#14221a" strokeWidth="1.200" fill="none" /></svg>
        </div>
        <div className="w-[39px] border-r border-[#35342f] bg-[#262624]" />
        <div className="flex-1 bg-[#262624]" />
      </div>
      <Fit w={112} className="ml-auto mr-[7px]">Thu  4 May, 19:21</Fit>
    </div>
  );
}

export default function App() {
  return (
    <div className="relative flex h-[900px] w-[1600px] flex-col overflow-hidden bg-white font-['Liberation_Sans',Arial,sans-serif]">
      <WindowTitle />
      <TabStrip />
      <Toolbar />
      <div className="flex h-[777px]">
        <div className="flex min-w-0 flex-1 flex-col overflow-hidden">
          <Breadcrumbs />
          <div className="flex min-h-0 flex-1">
            <Sidebar />
            <Overview />
            <Trends />
          </div>
        </div>
        <Scrollbar />
      </div>
      <Taskbar />
      <svg width="13" height="21" viewBox="0 0 13 21" className="absolute left-[862px] top-[526px]">
        <path d="M1 1v15.500l3.600-3.300 2.500 6 2.600-1.100-2.500-5.800H12z" fill="#fff" stroke="#222" strokeWidth="1.200" />
      </svg>
    </div>
  );
}
